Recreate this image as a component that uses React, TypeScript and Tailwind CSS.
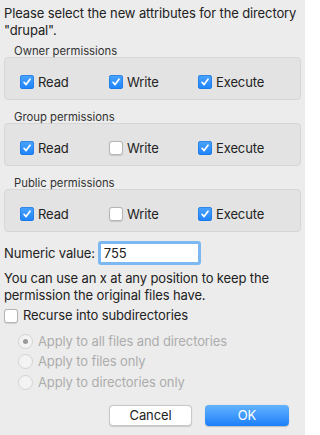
import React from 'react';

const font = { fontFamily: 'Inter, "Liberation Sans", sans-serif' };

function Check({ checked }: { checked: boolean }) {
  return checked ? (
    <span className="flex h-[14px] w-[14px] shrink-0 items-center justify-center rounded-[3px] bg-gradient-to-b from-[#4aa3fd] to-[#1a83fb] shadow-[inset_0_0_0_0.5px_#1670d8]">
      <svg width="10" height="10" viewBox="0 0 10 10" fill="none">
        <path d="M2 5.3 L4.1 7.6 L8 2.2" stroke="white" strokeWidth="1.7" strokeLinecap="round" strokeLinejoin="round" />
      </svg>
    </span>
  ) : (
    <span className="h-[14px] w-[14px] shrink-0 rounded-[3px] border border-[#b5b5b5] bg-white shadow-[0_0.5px_1px_rgba(0,0,0,0.12)]" />
  );
}

function Perm({ label, checked }: { label: string; checked: boolean }) {
  return (
    <div className="flex h-[17px] items-center gap-[4px] text-[#222]">
      <Check checked={checked} />
      <span>{label}</span>
    </div>
  );
}

function Group({ title, perms, first }: { title: string; perms: boolean[]; first?: boolean }) {
  return (
    <div className={first ? 'mt-[3px]' : 'mt-[8px]'}>
      <div className="h-[15px] pl-[10px] text-[11.3px] leading-[19px] tracking-normal text-[#333]">{title}</div>
      <div className="grid h-[43px] grid-cols-[89px_89px_89px] rounded-[4px] border border-[#d6d6d6] bg-[#e3e3e3] pl-[15px] pt-[15.5px]">
        <Perm label="Read" checked={perms[0]} />
        <Perm label="Write" checked={perms[1]} />
        <Perm label="Execute" checked={perms[2]} />
      </div>
    </div>
  );
}

function Radio({ label, selected }: { label: string; selected?: boolean }) {
  return (
    <div className="flex h-[20.5px] items-center gap-[5px] pl-[14px] text-[#adadad]">
      <span className="flex h-[15px] w-[15px] shrink-0 items-center justify-center rounded-full border border-[#d3d3d3] bg-[#f3f3f3]">
        {selected && <span className="h-[5px] w-[5px] rounded-full bg-[#9a9a9a]" />}
      </span>
      <span>{label}</span>
    </div>
  );
}

export default function App() {
  return (
    <div
      className="h-[435px] w-[305px] overflow-hidden bg-[#ececec] px-[4px] pt-[5px] text-[13px] leading-[17px] tracking-[-0.12px]"
      style={font}
    >
      <p className="text-[#222]">Please select the new attributes for the directory "drupal".</p>

      <Group title="Owner permissions" perms={[true, true, true]} first />
      <Group title="Group permissions" perms={[true, false, true]} />
      <Group title="Public permissions" perms={[true, false, true]} />

      <div className="mt-[9px] flex h-[24px] items-center gap-[3px] text-[#222]">
        <span>Numeric value:</span>
        <div className="h-[24px] w-[103px] rounded-[3px] bg-[#7cb9f2] p-[3px]">
          <div className="flex h-full items-center bg-white px-[3px] leading-none">755</div>
        </div>
      </div>

      <p className="mt-[5px] text-[#222]">
        You can use an x at any position to keep the permission the original files have.
      </p>

      <div className="mt-[3px] flex h-[17px] items-center gap-[5px] text-[#222]">
        <Check checked={false} />
        <span>Recurse into subdirectories</span>
      </div>

      <div className="mt-[7px] flex flex-col">
        <Radio label="Apply to all files and directories" selected />
        <Radio label="Apply to files only" />
        <Radio label="Apply to directories only" />
      </div>

      <div className="mt-[12px] flex justify-end gap-[13px] pr-[12px]">
        <button className="h-[21px] w-[83px] rounded-[4px] border border-[#c8c8c8] bg-white text-[#222] shadow-[0_0.5px_1px_rgba(0,0,0,0.15)]">
          Cancel
        </button>
        <button className="h-[21px] w-[84px] rounded-[4px] bg-gradient-to-b from-[#62b3fd] to-[#1a7ffa] text-white shadow-[0_0.5px_1px_rgba(0,0,0,0.2)]">
          OK
        </button>
      </div>
    </div>
  );
}
